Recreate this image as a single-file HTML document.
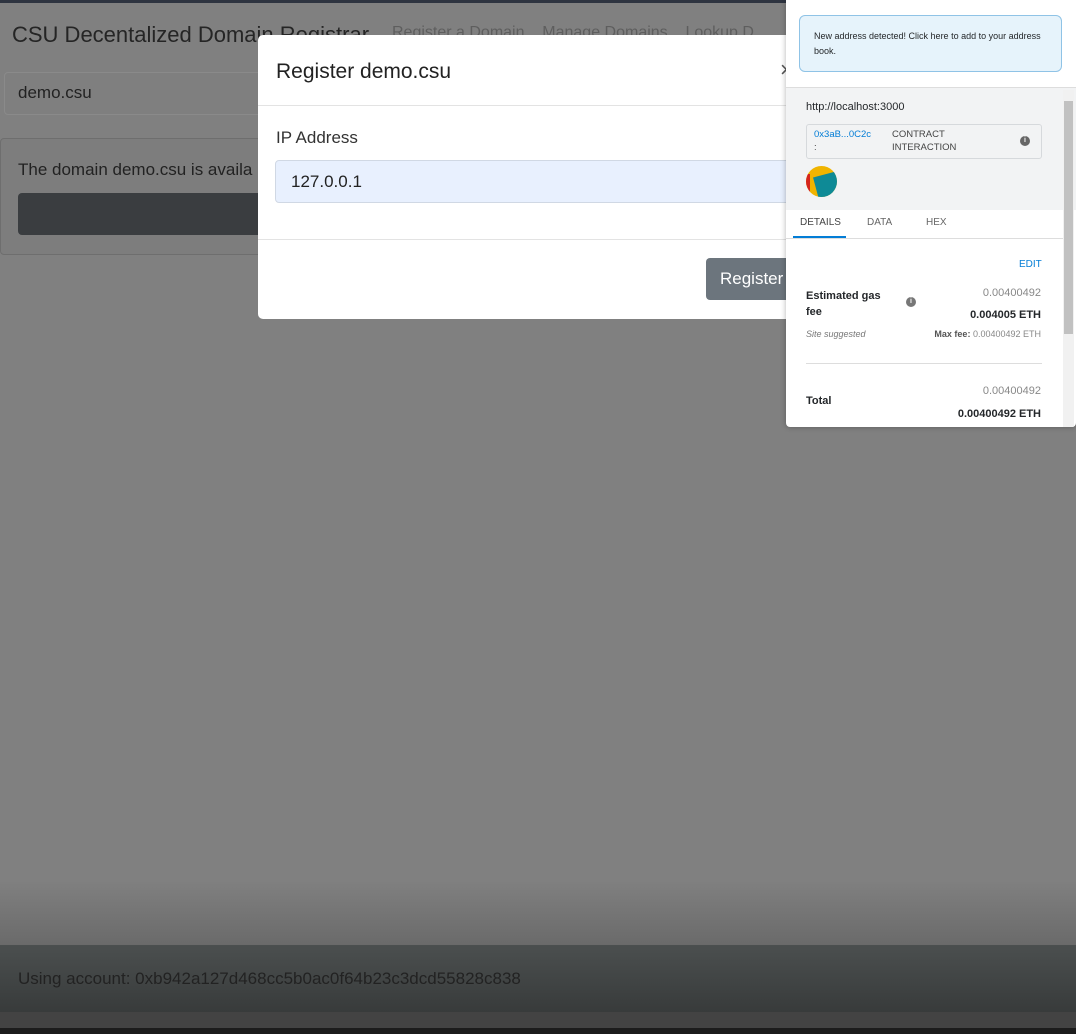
<!DOCTYPE html>
<html><head><meta charset="utf-8"><style>
*{box-sizing:border-box;margin:0;padding:0}
body{width:1076px;height:1034px;overflow:hidden;background:#808080;font-family:"Liberation Sans",sans-serif;position:relative}
.abs{position:absolute}
</style></head><body>
<div class="abs" style="left:0;top:0;width:1076px;height:3px;background:#2e3440"></div>
<div class="abs" style="left:12px;top:22px;font-size:22px;color:#252525">CSU Decentalized Domain Registrar</div>
<div class="abs" style="left:392px;top:24px;font-size:16px;color:#5e5e5e;white-space:nowrap">Register a Domain &nbsp;&nbsp; Manage Domains &nbsp;&nbsp; Lookup D</div>
<div class="abs" style="left:4px;top:72px;width:260px;height:43px;border:1px solid #8a8a8a;border-radius:4px;background:#7f7f7f"></div>
<div class="abs" style="left:18px;top:83px;font-size:17px;color:#222">demo.csu</div>
<div class="abs" style="left:0;top:138px;width:262px;height:117px;border:1px solid #6e6e6e;border-radius:4px;background:#7d7d7d"></div>
<div class="abs" style="left:18px;top:160px;font-size:17px;color:#222">The domain demo.csu is availa</div>
<div class="abs" style="left:18px;top:193px;width:245px;height:42px;background:#3a3d40;border-radius:4px"></div>

<div class="abs" style="left:0;top:880px;width:1076px;height:66px;background:linear-gradient(#808080,#6a6a6a)"></div>
<div class="abs" style="left:0;top:945px;width:1076px;height:67px;background:linear-gradient(#4b4f4f,#383b3b)"></div>
<div class="abs" style="left:0;top:1012px;width:1076px;height:16px;background:#434343"></div>
<div class="abs" style="left:0;top:1028px;width:1076px;height:6px;background:#1c1c1c"></div>
<div class="abs" style="left:18px;top:969px;font-size:17px;color:#222">Using account: 0xb942a127d468cc5b0ac0f64b23c3dcd55828c838</div>

<div class="abs" style="left:258px;top:35px;width:540px;height:284px;background:#fff;border-radius:5px;overflow:hidden">
 <div class="abs" style="left:18px;top:25px;font-size:21px;color:#222">Register demo.csu</div>
 <div class="abs" style="left:522px;top:22px;font-size:22px;color:#555">×</div>
 <div class="abs" style="left:0;top:70px;width:540px;height:1px;background:#e3e3e3"></div>
 <div class="abs" style="left:18px;top:93px;font-size:17px;color:#333">IP Address</div>
 <div class="abs" style="left:17px;top:125px;width:540px;height:43px;background:#e8f0fe;border:1px solid #d0d8e4;border-radius:4px"></div>
 <div class="abs" style="left:33px;top:137px;font-size:17px;color:#222">127.0.0.1</div>
 <div class="abs" style="left:0;top:204px;width:540px;height:1px;background:#e3e3e3"></div>
 <div class="abs" style="left:448px;top:223px;width:100px;height:42px;background:#6c757d;border-radius:4px;color:#fff;font-size:17px;padding:11px 0 0 14px">Register</div>
</div>

<div class="abs" style="left:786px;top:0;width:290px;height:427px;background:#fff;box-shadow:0 0 6px rgba(0,0,0,.3);border-radius:0 0 4px 4px;overflow:hidden">
 <div class="abs" style="left:13px;top:15px;width:263px;height:57px;background:#e6f3fb;border:1px solid #8fc3e6;border-radius:6px"></div>
 <div class="abs" style="left:28px;top:29px;width:236px;font-size:9px;line-height:15px;color:#24272a">New address detected! Click here to add to your address book.</div>
 <div class="abs" style="left:0;top:87px;width:290px;height:1px;background:#ddd"></div>
 <div class="abs" style="left:0;top:88px;width:290px;height:122px;background:#f2f3f4"></div>
 <div class="abs" style="left:20px;top:101px;font-size:11px;color:#24272a">http://localhost:3000</div>
 <div class="abs" style="left:20px;top:124px;width:236px;height:35px;border:1px solid #d6d9dc;border-radius:3px;background:#f2f3f4"></div>
 <div class="abs" style="left:28px;top:128px;font-size:9.5px;line-height:13px;color:#037dd6">0x3aB...0C2c<br><span style="color:#444">:</span></div>
 <div class="abs" style="left:106px;top:128px;font-size:9.5px;line-height:13px;color:#444">CONTRACT<br>INTERACTION</div>
 <div class="abs" style="left:234px;top:136px;width:10px;height:10px;border-radius:50%;background:#666;color:#fff;font-size:7px;text-align:center;line-height:10px;font-weight:bold">i</div>
 <div class="abs" style="left:20px;top:166px;width:31px;height:31px;border-radius:50%;overflow:hidden;background:#f0b400">
  <div class="abs" style="left:10px;top:8px;width:24px;height:26px;background:#0e8a96;transform:rotate(-15deg)"></div>
  <div class="abs" style="left:-4px;top:8px;width:8px;height:24px;background:#d5241c"></div>
 </div>
 <div class="abs" style="left:14px;top:217px;font-size:10px;color:#444">DETAILS</div>
 <div class="abs" style="left:81px;top:217px;font-size:10px;color:#666">DATA</div>
 <div class="abs" style="left:140px;top:217px;font-size:10px;color:#666">HEX</div>
 <div class="abs" style="left:7px;top:236px;width:53px;height:2px;background:#037dd6"></div>
 <div class="abs" style="left:0;top:238px;width:277px;height:1px;background:#ddd"></div>
 <div class="abs" style="left:233px;top:259px;font-size:10px;color:#037dd6">EDIT</div>
 <div class="abs" style="left:20px;top:288px;font-size:11px;line-height:16px;font-weight:bold;color:#24272a">Estimated gas<br>fee</div>
 <div class="abs" style="left:120px;top:297px;width:10px;height:10px;border-radius:50%;background:#777;color:#fff;font-size:7px;text-align:center;line-height:10px;font-weight:bold">i</div>
 <div class="abs" style="right:35px;top:287px;font-size:11px;color:#888">0.00400492</div>
 <div class="abs" style="right:35px;top:309px;font-size:11px;font-weight:bold;color:#24272a">0.004005 ETH</div>
 <div class="abs" style="left:20px;top:329px;font-size:9px;font-style:italic;color:#777">Site suggested</div>
 <div class="abs" style="right:35px;top:329px;font-size:9px;color:#888"><b style="color:#555">Max fee:</b> 0.00400492 ETH</div>
 <div class="abs" style="left:20px;top:363px;width:236px;height:1px;background:#ddd"></div>
 <div class="abs" style="right:35px;top:385px;font-size:11px;color:#888">0.00400492</div>
 <div class="abs" style="left:20px;top:395px;font-size:11px;font-weight:bold;color:#24272a">Total</div>
 <div class="abs" style="right:35px;top:408px;font-size:11px;font-weight:bold;color:#24272a">0.00400492 ETH</div>
 <div class="abs" style="left:277px;top:90px;width:11px;height:337px;background:#f1f1f1"></div>
 <div class="abs" style="left:278px;top:101px;width:9px;height:233px;background:#c1c1c1"></div>
</div>
</body></html>
